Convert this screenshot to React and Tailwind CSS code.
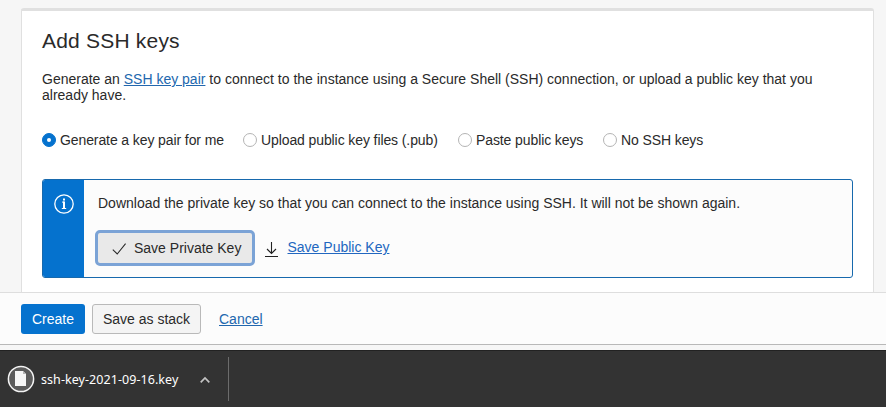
function Radio({ label, checked, className }) {
  return (
    <label className={`flex items-center tracking-[-0.1px] whitespace-nowrap ${className}`}>
      <span
        className={`mr-1 flex h-3.5 w-3.5 shrink-0 items-center justify-center rounded-full border ${
          checked ? 'border-[#0572ce] bg-[#0572ce]' : 'border-[#b4b4b4] bg-white'
        }`}
      >
        {checked && <span className="h-1 w-1 rounded-full bg-white" />}
      </span>
      {label}
    </label>
  );
}

function InfoIcon() {
  return (
    <svg width="20" height="20" viewBox="0 0 20 20" fill="none" stroke="#fff">
      <circle cx="10" cy="10" r="9.2" strokeWidth="1.3" />
      <path d="M10 7.6V14.6M10 4.4V6.4" strokeWidth="2" />
      <path d="M8 8.1H10M7.8 14.5H12.2" strokeWidth="1" />
    </svg>
  );
}

function FileIcon() {
  return (
    <svg width="28" height="28" viewBox="0 0 28 28" fill="none">
      <circle cx="14" cy="14" r="12.6" fill="#5c5c5c" stroke="#f4f4f4" strokeWidth="1.5" />
      <path d="M8 6H16L19 9V21H8Z" fill="#f7f7f7" />
      <path d="M16 6V9H19Z" fill="#b5b5b5" />
    </svg>
  );
}

export default function App() {
  return (
    <div className="flex h-[407px] w-[886px] flex-col overflow-hidden bg-[#f6f6f6] font-['Liberation_Sans',Arial,sans-serif] text-sm leading-4 text-[#2a2a2a]">
      <main className="h-[292px] overflow-hidden pt-2 pl-[21px]">
        <section className="h-[300px] w-[853px] rounded-t-[3px] border-x border-t-[3px] border-[#e0e0e0] bg-white px-5">
          <h1 className="mt-[18px] text-[21px] leading-6 tracking-[0.2px] whitespace-nowrap">Add SSH keys</h1>
          <p className="mt-[18px] whitespace-nowrap">
            Generate an <a className="text-[#2267ae] underline">SSH key pair</a> to connect to the instance using a Secure Shell (SSH) connection, or upload a public key that you
            <br />
            already have.
          </p>
          <div className="mt-[29px] flex">
            <Radio label="Generate a key pair for me" checked className="w-[201px]" />
            <Radio label="Upload public key files (.pub)" className="w-[215px]" />
            <Radio label="Paste public keys" className="w-[145px]" />
            <Radio label="No SSH keys" className="" />
          </div>
          <div className="mt-[31px] flex h-[99px] w-[811px] overflow-hidden rounded-[3px] border border-[#1769ad] bg-[#fcfcfc]">
            <div className="flex w-[41px] shrink-0 justify-center bg-[#0572ce] pt-3.5">
              <InfoIcon />
            </div>
            <div className="pl-3.5">
              <p className="mt-[15px] whitespace-nowrap">
                Download the private key so that you can connect to the instance using SSH. It will not be shown again.
              </p>
              <div className="mt-[19px] -ml-[3px] flex">
                <button className="flex h-9 w-40 items-center rounded-[5px] border-[3px] border-[#7ba3d6] bg-[#e9e9e9] pl-3.5">
                  <svg className="mr-2 mt-0.5" width="14" height="14" viewBox="0 0 14 14" fill="none" stroke="#2a2a2a" strokeWidth="1.1">
                    <path d="M0.8 7.6L5.2 12L13.6 1.6" />
                  </svg>
                  <span className="whitespace-nowrap">Save Private Key</span>
                </button>
                <svg className="mt-3 ml-2.5" width="13" height="16" viewBox="0 0 13 16" fill="none" stroke="#222" strokeWidth="1.1">
                  <path d="M6.5 0V11.5M2 7L6.5 11.5L11 7M0 14.5H13" />
                </svg>
                <a className="mt-[9px] ml-[9.5px] whitespace-nowrap text-[#2267c0] underline">Save Public Key</a>
              </div>
            </div>
          </div>
        </section>
      </main>
      <footer className="flex h-[53px] shrink-0 items-start border-t border-b border-t-[#dedede] border-b-[#b8b8b8] bg-[#fcfcfc] pt-[11px] pl-[21px]">
        <button className="h-[30px] w-16 rounded-[3px] bg-[#0572ce] text-white">Create</button>
        <button className="ml-[7px] h-[30px] w-[109px] rounded-[3px] border border-[#b9b9b9] bg-[#f4f4f4] whitespace-nowrap">Save as stack</button>
        <a className="mt-[7px] ml-[18px] text-[#2267ae] underline">Cancel</a>
      </footer>
      <div className="mt-[5px] flex h-[57px] shrink-0 items-start border-t border-[#222] bg-[#333] pl-1.5 font-['Noto_Sans',sans-serif] text-white">
        <div className="mt-[13.5px] ml-[0.5px]">
          <FileIcon />
        </div>
        <span className="mt-[21px] ml-[6.5px] w-[138px] text-[12.5px] leading-4 tracking-[0.06px] whitespace-nowrap">ssh-key-2021-09-16.key</span>
        <svg className="mt-[25px] ml-[21px]" width="10" height="8" viewBox="0 0 10 8" fill="none" stroke="#c4c4c4" strokeWidth="1.7">
          <path d="M0.7 6.3L5 2L9.3 6.3" />
        </svg>
        <div className="mt-1.5 ml-[18px] h-11 w-px bg-[#6c6c6c]" />
      </div>
    </div>
  );
}
